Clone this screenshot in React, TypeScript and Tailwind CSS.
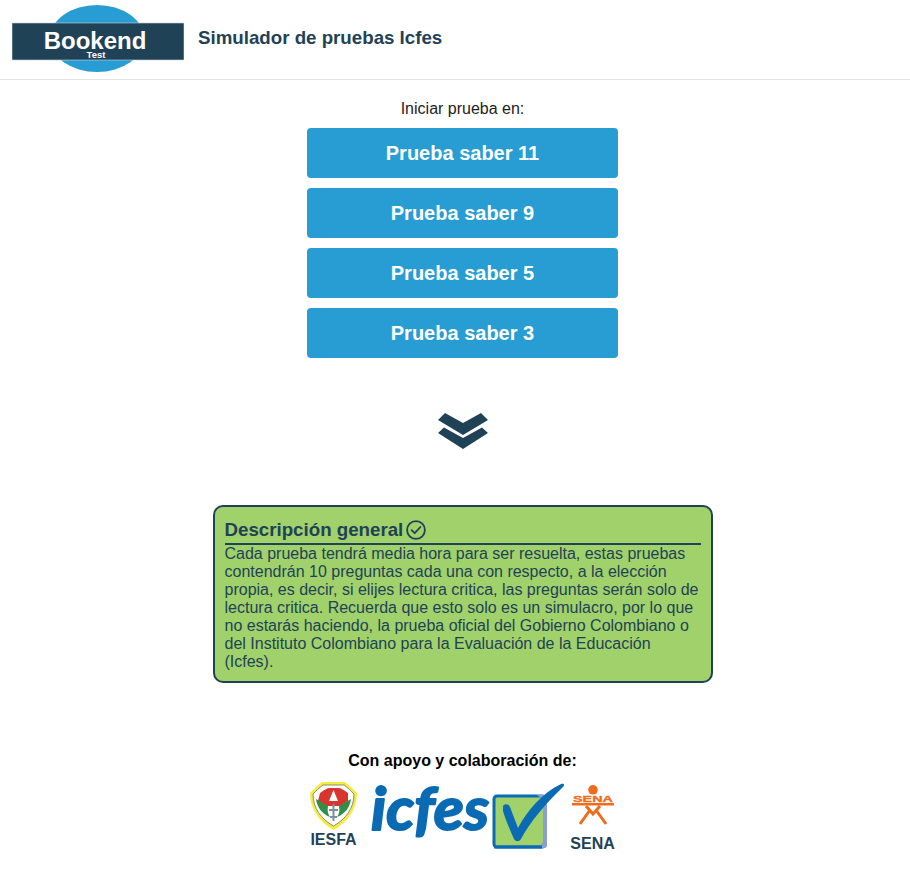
const pruebas = ['Prueba saber 11', 'Prueba saber 9', 'Prueba saber 5', 'Prueba saber 3'];

function Logo() {
  return (
    <svg width="172" height="67" viewBox="0 0 172 67" className="block shrink-0">
      <ellipse cx="85" cy="33.5" rx="47" ry="33.5" fill="#289dd4" />
      <rect x="0" y="18" width="172" height="37" fill="#1f4257" stroke="#c9d3d9" strokeWidth="0.6" />
      <text x="83" y="44" textAnchor="middle" fontSize="24" fontWeight="700" fill="#fff" fontFamily="'Liberation Sans', sans-serif">Bookend</text>
      <text x="84" y="53" textAnchor="middle" fontSize="9.5" fontWeight="700" fill="#fff" fontFamily="'Liberation Sans', sans-serif">Test</text>
    </svg>
  );
}

function Chevrons() {
  return (
    <svg width="52" height="38" viewBox="0 0 52 38" className="block">
      <path d="M1 8 L8 1 L26 11 L44 1 L51 8 L26 23 Z" fill="#1f4257" />
      <path d="M1 21 L7 15.5 L26 26 L45 15.5 L51 21 L26 37 Z" fill="#1f4257" />
    </svg>
  );
}

function CheckCircle() {
  return (
    <svg width="20" height="20" viewBox="0 0 20 20" fill="none" stroke="#1f4257" strokeWidth="1.8" className="block shrink-0">
      <circle cx="10" cy="10" r="8.9" />
      <path d="M5.6 10.2 L8.7 13.2 L14.4 7" strokeLinecap="round" strokeLinejoin="round" />
    </svg>
  );
}

function Iesfa() {
  return (
    <svg width="48" height="50" viewBox="0 0 48 50" className="block">
      <path d="M12 1 H35 C39 4 43 8 47 12 C47 28 38 41 23.5 49 C9 41 0 28 0 12 C4 8 8 4 12 1 Z" fill="#f6ec3c" />
      <path d="M13 4 H34 C38 7 41 10 44 13 C44 27 36 38 23.5 45 C11 38 3 27 3 13 C6 10 9 7 13 4 Z" fill="#fff" stroke="#8d8d78" strokeWidth="1" />
      <path d="M10 12 C14 9 17 7 20 7 H28 C31 7 34 9 38 12 L38 20 L30 25 H17 L8 20 Z" fill="#d8352f" />
      <path d="M6 18 L18 25 C17 30 18 33 20 36 C12 33 7 26 6 18 Z" fill="#2f8f46" />
      <path d="M41 18 L29 25 C30 30 29 33 27 36 C35 33 40 26 41 18 Z" fill="#2f8f46" />
      <path d="M19 20 L23.5 9 L28 20 Z" fill="#fff" />
      <path d="M23.5 23 V40 M19 29 H28 M20 36 H27" stroke="#7a8fa0" strokeWidth="2" fill="none" />
    </svg>
  );
}

function Icfes() {
  return (
    <svg width="121" height="78" viewBox="0 0 121 78" className="block">
      <text x="1" y="64" fontSize="60" fontWeight="700" fontStyle="italic" fill="#0b6ab4" stroke="#0b6ab4" strokeWidth="2" strokeLinejoin="round" textLength="118" lengthAdjust="spacingAndGlyphs" fontFamily="'Lato', sans-serif">icfes</text>
    </svg>
  );
}

function Visto() {
  return (
    <svg width="74" height="68" viewBox="0 0 74 68" className="block">
      <rect x="2" y="14" width="51" height="51" rx="3" fill="#a0d16b" stroke="#0b6ab4" strokeWidth="3" />
      <path d="M45 13 H52 A3 3 0 0 1 55 16 V63 A3 3 0 0 1 52 66 L46 66 L51 60 V18 Z" fill="#8a9fd0" />
      <path d="M2 65 H50" stroke="#0b6ab4" strokeWidth="3" />
      <path d="M11 24 C13 21 17 22 18 25 L26 46 C35 29 50 11 69 2 C72 1 73 3 71 5 C54 21 38 40 29 57 C27 60 24 60 22 57 C17 46 13 36 11 29 Z" fill="#0b6ab4" />
    </svg>
  );
}

function Sena() {
  return (
    <svg width="44" height="44" viewBox="0 0 44 44" className="block">
      <circle cx="22" cy="4.8" r="4.8" fill="#ee6c1b" />
      <text x="22" y="17" textAnchor="middle" fontSize="9" fontWeight="700" fill="#ee6c1b" stroke="#ee6c1b" strokeWidth="0.3" textLength="40" lengthAdjust="spacingAndGlyphs" fontFamily="'Liberation Sans', sans-serif">SENA</text>
      <path d="M1 19.2 H43" stroke="#ee6c1b" strokeWidth="2.4" />
      <path d="M15 21 L22 29 L29 21 M19 25 L9 39 M25 25 L35 39" stroke="#ee6c1b" strokeWidth="3" fill="none" />
    </svg>
  );
}

export default function App() {
  return (
    <div className="min-h-screen bg-white text-[#222] font-['Liberation_Sans',Arial,sans-serif]">
      <header className="flex items-center gap-[14px] h-[80px] pl-[12px] pb-[2px] border-b border-[#e3e3e3]">
        <Logo />
        <h1 className="text-[18.72px] font-bold text-[#1f4257]">Simulador de pruebas Icfes</h1>
      </header>

      <main className="flex flex-col items-center pl-[15px]">
        <p className="mt-[20px] text-[16px] leading-[18px]">Iniciar prueba en:</p>
        <div className="flex flex-col gap-[10px] w-[311px] mt-[10px]">
          {pruebas.map((p) => (
            <button key={p} className="h-[50px] rounded-[4px] bg-[#289dd4] text-white text-[20px] font-bold">
              {p}
            </button>
          ))}
        </div>

        <div className="mt-[54px]">
          <Chevrons />
        </div>

        <section className="mt-[55px] w-[500px] h-[178px] rounded-[10px] border-2 border-[#1f4257] bg-[#a0d16b] px-[10px] pt-[12px] text-[#1f4257]">
          <div className="flex items-center gap-[3px] border-b-2 border-[#1f4257] pb-[2px]">
            <h2 className="text-[18.72px] leading-[22px] font-bold">Descripción general</h2>
            <CheckCircle />
          </div>
          <p className="text-[16px] leading-[18px]">
            Cada prueba tendrá media hora para ser resuelta, estas pruebas contendrán 10 preguntas cada una con respecto, a la elección propia, es decir, si elijes lectura critica, las preguntas serán solo de lectura critica. Recuerda que esto solo es un simulacro, por lo que no estarás haciendo, la prueba oficial del Gobierno Colombiano o del Instituto Colombiano para la Evaluación de la Educación (Icfes).
          </p>
        </section>

        <p className="mt-[69px] text-[16px] leading-[18px] font-bold text-black">Con apoyo y colaboración de:</p>
        <div className="flex items-start mt-[11px] ml-[-1px]">
          <div className="flex flex-col items-center w-[48px]">
            <Iesfa />
            <span className="text-[16px] leading-[18px] font-bold text-[#1f4257]">IESFA</span>
          </div>
          <div className="ml-[12px] mt-[-15px]"><Icfes /></div>
          <div className="ml-[1px] mt-[1px]"><Visto /></div>
          <div className="flex flex-col items-center w-[44px] ml-[5px] mt-[4px]">
            <Sena />
            <span className="text-[16px] leading-[18px] font-bold text-[#1f4257] mt-[6px]">SENA</span>
          </div>
        </div>
      </main>
    </div>
  );
}
